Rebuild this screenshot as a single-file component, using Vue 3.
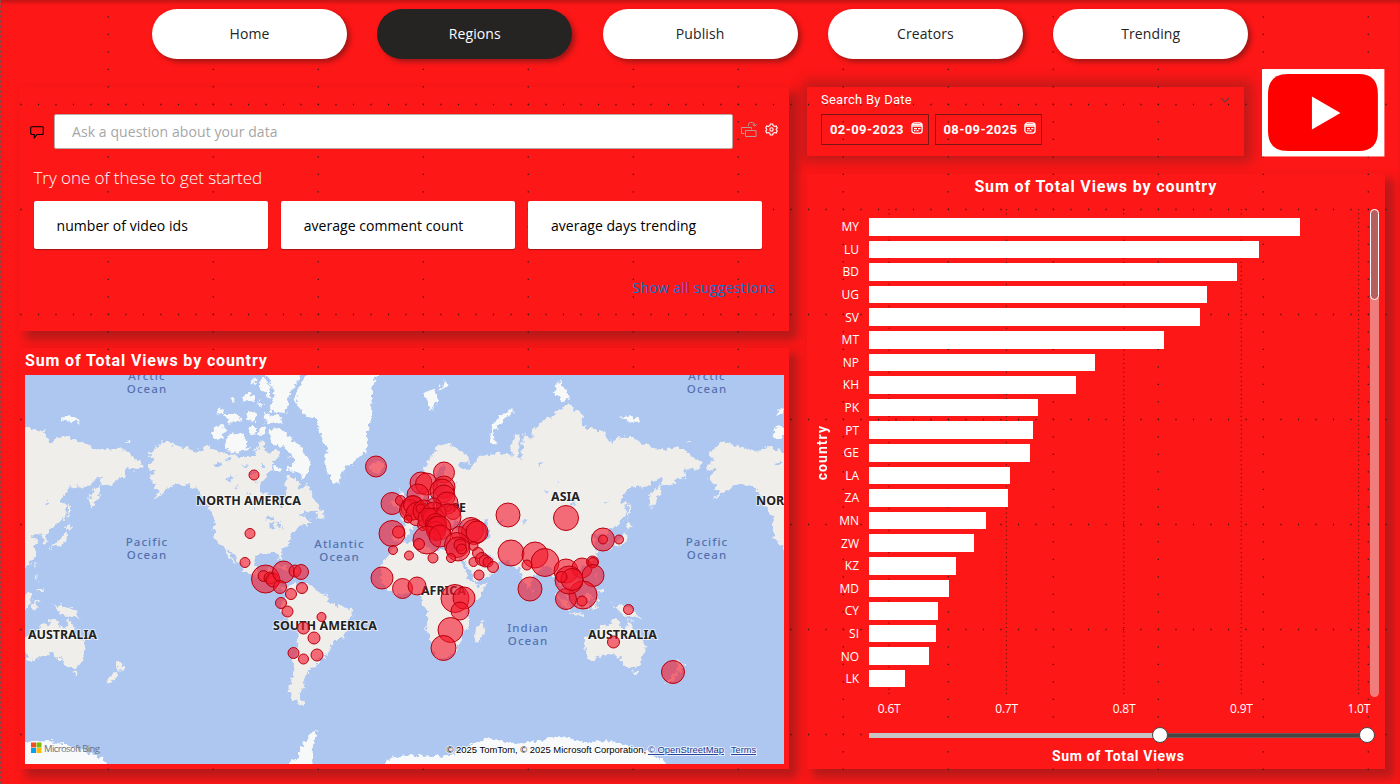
<script setup>
const tabs = ['Home', 'Regions', 'Publish', 'Creators', 'Trending']
const suggestions = ['number of video ids', 'average comment count', 'average days trending']
const dates = ['02-09-2023', '08-09-2025']

const bars = [
  ['MY', 431], ['LU', 390], ['BD', 367.5], ['UG', 338], ['SV', 331], ['MT', 295], ['NP', 225.5],
  ['KH', 207], ['PK', 168.7], ['PT', 163.5], ['GE', 161], ['LA', 140.7], ['ZA', 138.5], ['MN', 117],
  ['ZW', 105], ['KZ', 87], ['MD', 79.7], ['CY', 69], ['SI', 66.7], ['NO', 59.7], ['LK', 35.7],
]
const ticks = ['0.6T', '0.7T', '0.8T', '0.9T', '1.0T']

// Web Mercator projection, one full turn = 560px
const R = 560 / (2 * Math.PI)
function project(list) {
  return list.trim().split(/\s+/).map((pair) => {
    const [lon, lat] = pair.split(',').map(Number)
    const x = 407 + (lon * 560) / 360
    const y = 602 - R * Math.log(Math.tan(Math.PI / 4 + (lat * Math.PI) / 360))
    return x.toFixed(1) + ',' + y.toFixed(1)
  }).join(' ')
}

const land = [
  '-168,65.6 -164,66.5 -162,67 -166,68.3 -163,69.5 -156.5,71.3 -150,70.5 -141,69.7 -135,69 -128,70.3 -124,69.5 -115,68.5 -108,68 -98,68 -95,70 -94,72 -91,69.5 -88,68.5 -85,69.5 -82,69.5 -81.5,68 -86,66.5 -87,64.5 -94,61 -94.5,58.7 -92.5,57 -88,56.5 -82.3,55.2 -82,52.5 -79,51.5 -78.7,53 -79.5,55 -77,57 -78.5,59 -77.5,62.4 -73.5,62.3 -69.5,61 -69.5,58.8 -66,58.7 -64.5,60.3 -62,57.5 -60,55 -56,52.5 -56,51.5 -60,50.2 -66,50.2 -69.5,48 -64.5,49 -65,47 -61,45.7 -65.5,43.6 -67,45 -70,43.7 -70.5,42 -74,40.5 -75.5,38 -76,35 -81,31.7 -80,27 -80.7,25.2 -82.5,27.7 -84,30 -89.5,30 -94,29.6 -97.3,27.5 -97.7,22.5 -96,19.2 -94,18.2 -91,18.7 -90.3,21 -87,21.4 -88,18 -88.8,15.9 -83.3,15 -83.7,11 -81,8.8 -77.5,8.5 -78,7.5 -80.3,7.5 -83,8.3 -85.7,10.5 -87.7,13 -92,14.5 -94.5,16.2 -97,15.8 -102,18 -105.5,20 -105.5,22.7 -109,26 -112.8,31 -114.7,31.7 -112,27 -109.5,23.1 -112.2,25 -115,28 -117.1,32.5 -120.6,34.5 -124,39 -124.2,43 -124,48 -127.5,51 -131,55 -135,58.5 -140,59.8 -148,60.3 -151.5,59.3 -154,58.5 -159,56 -163,54.8 -158,58 -162,58.7 -162,60 -165.5,61.5 -165,63 -161,64.3 -166,64.5',
  '-59,47.7 -53,47 -53.5,49 -56,51.4', '-84.8,22 -80,23 -74.3,20.2 -77.5,19.9 -78,20.7', '-74,19.8 -68.5,18.7 -71,17.8 -74,18.4',
  '-77.5,8.5 -75,11 -71.5,12.3 -71.5,10.8 -68,11.5 -62,10.7 -57,6 -51.5,4.5 -50,0 -44,-2.5 -39,-3 -35,-5.5 -35,-9 -39,-13 -39.3,-18 -41,-22 -45,-23.5 -48.5,-26 -49,-29 -53.5,-34 -58.3,-34 -57,-36.5 -58,-38.5 -62,-39 -62.5,-41 -65,-41 -63.7,-42.5 -67.3,-46 -66,-48 -69,-50.5 -68.5,-52.5 -65.5,-55 -69,-55.3 -73,-53 -75.5,-50 -75.5,-46.7 -73,-42 -73.5,-37 -71.5,-32 -70.3,-25 -70.3,-18.3 -76,-14 -79.5,-7 -81.2,-5 -80.3,-3 -80.8,-1 -78.7,1.5 -77.3,4',
  '-6,35.8 -9.8,31.5 -13,27.7 -17,21.5 -16.3,18 -17.4,14.7 -15,11 -12.7,8 -9,5 -7.5,4.4 -4,5.2 2,6.3 5,5.2 7,4.4 9.5,4 9.8,1 9,-1 12,-5 13.5,-9 13.7,-12 11.8,-17 14.5,-22.5 15.3,-27 18,-32.5 18.5,-34.3 22,-34.1 26,-33.8 30.5,-31 32.8,-27.5 35.4,-24 35,-20.5 40.5,-15.5 40.5,-10.5 39,-6.5 41.5,-1.8 48,4.5 51.2,11.8 44.5,10.4 43,12 39,15.5 37,19.5 35.5,24 32.5,29.9 34,31.2 32,31.2 29,30.9 25,31.6 20,32.5 19,30.5 15.5,31.7 11,33.2 10.5,37 0,35.7',
  '-9.2,38.8 -8.9,37 -6.2,36.5 -5.3,36.1 -2,36.8 0,38.6 0,40 3.2,42 4,43.5 7.5,43.8 10.3,43.3 12.5,41.5 15.7,40 16,38 18.3,40 13.8,42.8 12.4,45.3 15,44.6 19.4,41.8 19.5,40 22.8,36.6 24,38 23,40.5 26.2,40.7 26.2,39.3 27.5,37 30.5,36.5 36,36.7 35,32.5 34,31.2 32.5,29.9 34.8,28 39,21.5 42.7,16.5 43.5,12.7 45,12.8 52,16 55.3,17.5 59.8,22.5 56.3,26.2 54,24.2 51.5,25.8 50,26.7 48,30 50.5,30 54.5,26.7 61.5,25.2 66.7,25 69,22.3 70.8,20.8 72.7,21 72.9,18 74.8,13 77.5,8.1 79.8,10.5 80.3,15.5 82.5,17 87,21.5 91.5,22.7 94.3,16.2 97.5,16.5 98.7,10 100.4,6.5 103.5,1.3 103.4,4.3 100.2,8 99.2,11 100,13.4 102.5,12.1 105,8.7 109.3,12 108.5,15.5 105.7,19 108.2,21.5 110,20.5 113.5,22.2 118,24.3 121.8,29 120,34 122.3,37 118,38.5 121.5,40.8 125,39.7 126.5,37 126.5,34.4 129.4,35.5 127.6,39.5 130.6,42.4 135.5,44.5 140.5,48.5 141,53 137,54 138,55.5 142.5,59 148.5,59.4 155,59.3 160,61.6 164,62.5 163,60 158,57.8 155.7,56.5 156.8,51.1 160,53.5 162.5,57 163.3,59.8 170,60 176,62.4 179.3,62.3 179,65 187,64.3 190.2,66 184,67.5 180,69 175,69.9 161,69.5 152,71 140,72.5 130,71 127,73.3 113,74 113,76 104,77.7 92,75.7 81,73.6 80.5,72 77,72.3 74.5,72.8 74,68 72,67 72.5,73 69,72.9 67,69.5 68.5,68.3 60,68.6 54,68.3 46,68 44,66.3 40,64.6 35,64.3 33,66.6 41,66.3 40,67.7 33,69.4 26,71 19,70 12.5,66 10,63.5 5,61.8 5.5,59 8,58 11,59.2 12.5,56.2 14.3,55.5 16.5,57 18.8,60 17.3,61.5 22,65.8 25,65 21.5,62.5 22.5,60 29,60 23.5,59.2 24,57.2 21.2,57 19.5,54.4 14,54 10.5,54.3 10.5,57.5 8.2,57 8.5,54 4.5,52.5 1.5,50.8 -1.5,49.6 -4.7,48.5 -1.5,46 -1.5,43.4 -9,43.2',
  '-5.5,50 1,51 1.5,52.8 -2,55.8 -2,57.6 -5,58.6 -5,56 -3,54 -5,52', '-10,52 -6.2,52.2 -6,54.5 -8,55.2 -10,54',
  '142,54 143.5,52 143,49 142,46', '131,34 136,33.7 140.5,35.5 141.8,39.5 141.3,41.3 140,40 136.8,37 133,35.5', '140,42 145.3,43.4 142,45.4', '130,33.5 131.8,33 130.7,31.2',
  '120.3,16 122,18.5 121.5,14.5 124,13', '122,7 126.5,7 125.5,9.7', '120.2,23 121.9,25 120.8,22',
  '95.4,5.5 98.5,3.7 104,-2 105.8,-5.8 102,-4', '109,1.5 113,3 117,7 119,5 117.5,1 116,-4 111,-3', '105.3,-6.5 114.4,-7.8 114.4,-8.7 106,-7.6',
  '119.5,-5.5 119,-2.5 120,1 125,1.5 121,-1 123,-4', '131,-0.8 135,-3.3 138,-1.7 145,-4.5 150.5,-10.5 147,-9.5 143,-8.5 138,-8',
  '49.3,-12 50.3,-15.5 47,-25 44,-24.5 43.5,-21 44.5,-16', '80,9.5 81.8,7 80,6',
  '173,-34.5 178.3,-37.8 175.3,-41.5 173.8,-39', '172.7,-40.5 174.2,-41.7 168.5,-46.6 166.6,-45.8',
  '113.7,-22.5 114,-26 115.7,-32 115,-34.3 118,-35 124,-33.8 129,-31.7 133,-32 136,-34.8 138,-33 138,-35.6 140.5,-38 144,-38.5 147,-39 150,-37.2 151.3,-33.5 153.5,-28.5 151,-24 146.5,-19 145.3,-15 142.5,-10.8 141.5,-13.5 140.5,-17.6 137,-16 135.5,-15 136.8,-12.2 132.5,-11.3 130,-13.5 129,-15 126,-14 122.2,-18 119,-20',
  '144.8,-40.8 148.3,-41 147,-43.5',
].map(project)

const ice = [
  '-61.5,66.6 -64,63.5 -66,62 -72,64 -78,64.5 -73,65.8 -73,68 -79,70 -88,71 -89,73.5 -80,73.7 -75,72 -68,70.3 -67,68.8',
  '-117,70 -113,68.7 -105,69 -101,69.7 -105,72.5 -108,73 -114,72.7 -118,71', '-125,72 -121,71.5 -117,73 -115,73.5 -119,74.2 -124,74',
  '-66,82 -70,80.500 -75,79 -78,76.300 -89,76.500 -85,79 -90,81 -80,83 -70,83', '-80,74.6 -91,74.8 -92,76.4 -80,75.6', '-106,75 -115,74.8 -117,76 -108,76',
  '-96,73 -101,72.5 -102,74 -97,74', '-90.5,72.8 -95,72.5 -95,74 -91,74', '-97,75 -103,75.3 -102,76.6 -97,76.3', '-98,78 -105,78 -104,79 -98,78.8',
  '-88,78.3 -95,79.5 -93,81 -88,80', '-80.5,63.8 -86,64.3 -85,65.8 -81,64.5',
  '-117,76.300 -122,76 -120,77.300', '-110,77.800 -114,77.800 -112,78.500', '-100,80 -97,80.300 -99,80.900', '-96,77.300 -92,77.600 -95,78', '-99,69 -96,69.600 -98,70', '-74,68 -77,67.500 -76,68.500',
  '-73,78.3 -66,76 -58.5,75.5 -55,72 -51,69.5 -53.5,67 -52,64 -48,61 -43.5,60 -42.5,62.5 -40,65 -36,66 -30,68 -26,69.5 -25,71 -26,73 -23,75 -23,77.500 -22,80 -17,81.7 -25,83.3 -60,83 -65,81',
  '-24,65.5 -22.5,64 -18.5,63.4 -14,65 -16,66.4 -22,66.4', '11,79 16,76.7 19,78 20,79 16,79.5', '19,79.4 27,79.8 24,80.400',
  '53,71 57,70.6 55.5,73 61,75 68.5,76.4 67,76.9 58,75.5 54,73', '95,79 100,78 105,78.5 98,80.5', '137,75.5 143,74.8 150,75 144,76', '178.5,71 182,71 181,71.6',
  '-57,-63 -60,-66 -61,-70 -60,-74 -80,-74 -75,-71 -72,-71 -68,-68 -64,-65',
].map(project)

const water = [
  '28,41.5 28,43.5 31,46.5 36.5,45.2 41.5,42 37,41 33,42', '47,44.5 51,47 53,45 50.5,44.5 53.5,41 53.5,37.2 50,37.3 49,40.5',
  '-92,46.8 -86,46.7 -84.5,46.5 -88,48.5', '-87.8,42 -86.3,42 -85,45.8 -87.5,45', '-84,45.8 -81,45.5 -81.5,43.3 -83,43.5', '-83,41.7 -79,42.7 -80,42.9', '-124,66 -119,66.5 -121,65', '-116,62.3 -110,62.8 -114,61', '-98.5,53 -97,51 -98,50.8', '104,51.6 109.5,55.5 106,52', '31,61 32.5,60.5 31.5,60', '58.5,45.5 61,46 60,44', '74,46.2 78.5,46.7 75,45.2', '31.8,0.3 34,0 33,-2.3',
  '-103,58 -101,56.500 -102,56.200', '-112,59.200 -108,59.600 -110,58.800', '-106,66 -103,65.500 -104,64.800', '-101,63.500 -97,64.300 -99,62.800', '-117,67.300 -112,67.800 -114,66.900', '-94,66 -91,65.500 -93,64.500', '-98,60.500 -96,61 -97,59.800', '-72,54.500 -70,53.500 -74,53.200',
  '84,67 87,66 86,65', '96,62 98,60.500 97,60', '88,58 91,57.500 89,57', '127,53.800 130,54 128,53',
].map(project)

const bubbles = [
  [376,466.5,10.5],[421,483,11],[426.5,484,11],[444,472.5,10.5],[444,487,11],[442,491,12],[418,495,11],[392,503.5,11],[400.5,500.5,5],[444,496,11],
  [413,508,12],[410,510,10.5],[413,505,9.5],[418,514,12],[424,511,11],[447,503,11],[453,512,7.5],[434,505,7],[420.5,508.5,4.5],[426,516,4.5],[423,525,5.5],[408,519,4],
  [434,514,12],[434,519,11],[429,519,11],[448,517,13],[436,524,10.5],[436,527,10.5],[436,531,9.5],[439,528,12],[392,533.5,13],[398.5,532,6],[427,540,14],[419,544,5.5],[440,536,11],
  [471,530,12.5],[474,532,12.5],[477,532,11],[459,534,7.5],[457,545,12.5],[458,549,12],[460,545,6],[461.5,549,5],[393,550,4.5],[409,555.5,4.5],
  [433,558,5],[451,558,4.5],[473.5,546,4.5],[478,553,5.5],[473.5,562,4.5],[482,559,6.5],[485,561,6],[488,562,5],[493,567,5.5],
  [508,515,12],[511,553,13],[479,575,5],[382,578,11],[402.5,588.5,10],[417,586,9],[455,598.5,14],[464,598,11],[460,611,9],
  [450.5,630,12.5],[443.5,648,12.5],[265.5,579,14],[263.5,576,5.5],[270,578,6],[273,580,7],[283.5,572,11],[280,587,6.5],[295,571,6],
  [301,572,7.5],[302,588,5.5],[291,594,5.5],[281,603,5.5],[287.5,611.5,5.5],[321.5,617,4.5],[303.5,628,6],[314,638,6],[293.5,653,5.5],
  [303.5,659,5],[317,655,6],[245,562.5,5],[254,475,5],[250,533.5,5],[566,518,12.5],[603,539.5,11.5],[603,539.5,4.5],[619,539.5,4.5],
  [535,555,13],[545,562.5,14],[566,571,12],[582,568,10],[592.5,562,6],[593,562.5,5],[593,575.5,11],[583,595,14],[566,599,10.5],
  [569,580,14],[572,579.5,11],[561.5,577,5.5],[582,601,5],[530,589,12],[527,565,5],[628.5,609.5,5],[613.5,642,6],[673,672,11.5],
]
</script>

<template>
  <div class="page">
    <svg class="dots" width="1400" height="784" aria-hidden="true">
      <g stroke="#3a1a1a" stroke-width="1.3" fill="none">
        <path v-for="c in 13" :key="'c' + c" :d="`M${3.3 + c * 105} 16.2V784`" stroke-dasharray="1.2 16.3" />
        <path v-for="r in 7" :key="'r' + r" :d="`M20.4 ${r * 105 - 0.5}H1400`" stroke-dasharray="1.2 16.3" />
      </g>
    </svg>

    <nav class="tabs">
      <button v-for="t in tabs" :key="t" :class="['tab', { active: t === 'Regions' }]">{{ t }}</button>
    </nav>

    <main class="board">
      <div class="left">
        <section class="panel qa">
          <div class="over">
            <div class="ask-row">
              <svg class="bubble-icon" width="14" height="13" viewBox="0 0 14 13" fill="none" stroke="#000" stroke-width="1.1">
                <path d="M1.500.7h11l.8.8v6.200l-.8.8H7L4.300 11.800V8.500H1.500L.7 7.700V1.500z" />
              </svg>
              <div class="ask">Ask a question about your data</div>
              <svg class="convert-icon" width="16" height="17" viewBox="0 0 16 17" fill="none" stroke="#b99a98">
                <path d="M3.500 12.500H.5v-6h10v2M4.500 9.500h10.500v6H4.500zM7.500 5V3.500q0-2 2-2h2q2 0 2 3M11.500 3.500l2 1.500 2-1.500" />
              </svg>
              <svg class="gear-icon" width="13" height="13" viewBox="0 0 13 13" fill="none" stroke="#fff" stroke-width="1.1">
                <path d="M5.300 1h2.400l.4 1.600 1.500.8 1.600-.5 1.100 2-1.100 1.200v.8l1.100 1.200-1.100 2-1.600-.5-1.500.8-.4 1.600H5.300l-.4-1.600-1.500-.8-1.600.5-1.100-2 1.100-1.200v-.8L.7 4.900l1.100-2 1.600.5 1.500-.8z" />
                <circle cx="6.500" cy="6.500" r="1.700" />
              </svg>
            </div>
            <h2 class="try">Try one of these to get started</h2>
            <div class="cards">
              <div v-for="s in suggestions" :key="s" class="card">{{ s }}</div>
            </div>
            <a class="show-all">Show all suggestions</a>
          </div>
        </section>

        <section class="panel map-panel">
          <div class="over">
            <h3 class="title">Sum of Total Views by country</h3>
            <svg class="map" width="759" height="389" viewBox="25 375 759 389">
              <defs>
                <filter id="coast" x="-5%" y="-5%" width="110%" height="110%">
                  <feTurbulence type="fractalNoise" baseFrequency="0.22" numOctaves="2" seed="4" result="n" />
                  <feDisplacementMap in="SourceGraphic" in2="n" scale="8" xChannelSelector="R" yChannelSelector="G" />
                  <feGaussianBlur stdDeviation="0.4" />
                </filter>
                <g id="world">
                  <polygon v-for="(p, i) in land" :key="'l' + i" :points="p" fill="#efeeeb" />
                  <polygon v-for="(p, i) in ice" :key="'i' + i" :points="p" fill="#f7f8f8" />
                  <polygon v-for="(p, i) in water" :key="'w' + i" :points="p" fill="#adc7f1" />
                  <path d="M385 770V760L400 756L420 755L450 757L466 747L490 738L508 743L530 742L560 737L585 742L612 741L640 749L662 759L672 770Z" fill="#f7f9fb" />
                </g>
              </defs>
              <rect x="25" y="375" width="759" height="389" fill="#adc7f1" />
              <g filter="url(#coast)">
                <use href="#world" />
                <use href="#world" x="-560" />
                <use href="#world" x="560" />
              </g>
              <g class="ocean">
                <text x="147" y="380">Arctic</text><text x="147" y="393">Ocean</text>
                <text x="707" y="380">Arctic</text><text x="707" y="393">Ocean</text>
                <text x="147" y="546">Pacific</text><text x="147" y="559">Ocean</text>
                <text x="707" y="546">Pacific</text><text x="707" y="559">Ocean</text>
                <text x="339.500" y="548">Atlantic</text><text x="339.500" y="561">Ocean</text>
                <text x="528" y="632">Indian</text><text x="528" y="645">Ocean</text>
              </g>
              <g class="continent">
                <text x="196" y="505" textLength="105">NORTH AMERICA</text>
                <text x="756" y="505" textLength="105">NORTH AMERICA</text>
                <text x="273" y="630" textLength="104">SOUTH AMERICA</text>
                <text x="28" y="639" textLength="69">AUSTRALIA</text>
                <text x="588" y="639" textLength="69">AUSTRALIA</text>
                <text x="421" y="595" textLength="45">AFRICA</text>
                <text x="551" y="501" textLength="29">ASIA</text>
                <text x="420" y="512" textLength="46">EUROPE</text>
              </g>
              <g fill="#f41428" fill-opacity="0.6" stroke="#b8000c" stroke-width="1">
                <circle v-for="(b, i) in bubbles" :key="i" :cx="b[0]" :cy="b[1]" :r="b[2]" />
              </g>
              <g>
                <path d="M31 742.500h5v5h-5z" fill="#f25022" /><path d="M36.500 742.500h5v5h-5z" fill="#7fba00" />
                <path d="M31 748h5v5h-5z" fill="#00a4ef" /><path d="M36.500 748h5v5h-5z" fill="#ffb900" />
                <text class="bing" x="44" y="752" textLength="56">Microsoft Bing</text>
              </g>
              <g class="credit">
                <text x="446.500" y="753" textLength="199.500" lengthAdjust="spacingAndGlyphs">© 2025 TomTom, © 2025 Microsoft Corporation,</text>
                <text class="link" x="648" y="753" textLength="76" lengthAdjust="spacingAndGlyphs">© OpenStreetMap</text>
                <text class="link" x="731" y="753" textLength="25" lengthAdjust="spacingAndGlyphs">Terms</text>
              </g>
            </svg>
          </div>
        </section>
      </div>

      <div class="right">
        <div class="top-row">
          <section class="panel slicer">
            <div class="over">
              <div class="slicer-head">
                <span>Search By Date</span>
                <svg width="10" height="6" viewBox="0 0 10 6" fill="none" stroke="#6b3b3b" stroke-width="1.2"><path d="M1 1l4 4 4-4" /></svg>
              </div>
              <div class="dates">
                <div v-for="d in dates" :key="d" class="date">
                  <span>{{ d }}</span>
                  <svg width="12" height="12" viewBox="0 0 12 12" fill="none" stroke="#fff" stroke-width="1.3">
                    <rect x=".9" y=".9" width="10.200" height="10.200" rx="2.600" /><path d="M1 2.700h10M1 4.200h10M3 6.700h3M7 6.700h2.500M3 8.700h1.500M5.500 8.700h2" />
                  </svg>
                </div>
              </div>
            </div>
          </section>
          <svg class="logo" width="123" height="88" viewBox="0 0 123 88">
            <rect width="122.500" height="87.500" fill="#fff" />
            <path d="M26 5H97Q116 5 116 25V62Q116 82 97 82H26Q6 82 6 62V25Q6 5 26 5Z" fill="#f00" />
            <path d="M50 27.500L78.500 44L50 60.500Z" fill="#fff" />
          </svg>
        </div>

        <section class="panel chart">
          <div class="over">
            <h3 class="title center">Sum of Total Views by country</h3>
            <div class="chart-body">
              <div class="y-title"><span>country</span></div>
              <div class="plot">
                <svg class="gridlines" width="500" height="488" aria-hidden="true">
                  <path v-for="n in 5" :key="n" :d="`M${20 + (n - 1) * 117.400} 0V488`" stroke="#451010" stroke-width="1" stroke-dasharray="1 3.400" />
                </svg>
                <div v-for="b in bars" :key="b[0]" class="bar-row">
                  <span class="cat">{{ b[0] }}</span>
                  <div class="bar" :style="{ width: b[1] + 'px' }"></div>
                </div>
              </div>
              <div class="scroll"><div class="thumb"></div></div>
            </div>
            <div class="ticks"><span v-for="t in ticks" :key="t">{{ t }}</span></div>
            <div class="slider"><i class="knob"></i><div class="range"></div><i class="knob"></i></div>
            <div class="x-title">Sum of Total Views</div>
          </div>
        </section>
      </div>
    </main>
  </div>
</template>

<style>
body { margin: 0; background: #fe1717; }
</style>

<style scoped>
* { box-sizing: border-box; }
.page {
  position: relative; width: 1400px; height: 784px; overflow: hidden; background: #fe1717; color: #fff;
  font-family: "Open Sans", "Noto Sans", sans-serif; border-left: 1px dashed #8f4747;
  box-shadow: inset 0 4px 4px -2px rgba(90, 20, 20, .45);
}
.dots { position: absolute; left: -1px; top: 0; z-index: 1; }
.tabs { position: relative; z-index: 2; display: flex; gap: 30.300px; padding: 9px 0 0 151px; }
.tab {
  width: 195px; height: 50px; border: 0; padding: 0 0 2px; border-radius: 25px; background: #fff; color: #252423;
  font: 400 14px "Open Sans", sans-serif; letter-spacing: .1px; box-shadow: 3px 3px 5px rgba(70, 20, 20, .5);
}
.tab.active { background: #252423; color: #fff; }
.board { display: flex; gap: 18px; padding: 28px 0 0 19px; }
.left { width: 769px; display: flex; flex-direction: column; gap: 17px; }
.right { width: 577.500px; display: flex; flex-direction: column; }
.panel { background: #fe1717; box-shadow: 7px 7px 9px 2px rgba(60, 30, 30, .36); }
.over { position: relative; z-index: 2; }
.qa { height: 244px; }
.qa .over { padding: 27px 0 0 13px; }
.ask-row { display: flex; margin-left: -3px; }
.bubble-icon { margin: 12px 10px 0 0; flex: none; }
.ask {
  width: 679px; height: 35px; flex: none; border: 1px solid #b9a8a6; background: #fff; color: #a6a6a6; border-radius: 2px;
  font-weight: 400; font-size: 14px; line-height: 34px; padding-left: 17px; letter-spacing: .08px;
}
.convert-icon { margin: 7px 8px 0 8px; flex: none; }
.gear-icon { margin-top: 9px; flex: none; }
.try { margin: 17px 0 11px .5px; font-size: 17px; font-weight: 300; line-height: 24px; letter-spacing: -.06px; }
.cards { display: flex; gap: 12.700px; margin-left: .5px; }
.card {
  width: 234.500px; height: 48px; background: #fff; color: #000; border-radius: 2px; padding-left: 23px;
  font-size: 14px; font-weight: 400; line-height: 50px; letter-spacing: .05px; box-shadow: 0 1px 1px rgba(70, 20, 20, .5);
}
.show-all { display: block; text-align: right; margin: 29px 14px 0 0; color: #0078d4; font-size: 14px; font-weight: 400; line-height: 20px; letter-spacing: .4px; }
.map-panel { height: 421px; }
.map-panel .over { padding-left: 5px; }
.title { margin: 0; height: 27px; font: 700 16px/26px Roboto, sans-serif; letter-spacing: .86px; }
.map { display: block; }
.ocean text { font: 500 11.500px "Noto Sans", sans-serif; fill: #5672ad; letter-spacing: 1.050px; text-anchor: middle; }
.continent text { font: 700 12.500px "Noto Sans", sans-serif; fill: #222; stroke: #fff; stroke-opacity: .6; stroke-width: 2px; paint-order: stroke; }
.bing { font: 400 9.500px "Open Sans", sans-serif; fill: #6b7178; }
.credit text { font: 400 9.500px "Liberation Sans", sans-serif; fill: #000; stroke: #fff; stroke-opacity: .7; stroke-width: 2px; paint-order: stroke; }
.credit .link { fill: #1f3a93; text-decoration: underline; }
.top-row { display: flex; gap: 18px; height: 87px; }
.slicer { width: 437px; height: 69px; box-shadow: 2px 0 12px 6px rgba(60, 30, 30, .32); }
.slicer .over { padding: 4px 14px 0; }
.slicer-head { display: flex; justify-content: space-between; align-items: center; height: 18px; font: 400 13px/18px Roboto, sans-serif; letter-spacing: .25px; }
.dates { display: flex; gap: 6px; margin-top: 5px; }
.date {
  width: 107.500px; height: 31px; border: 1.500px solid #7d1616; display: flex; align-items: center; padding: 0 0 0 8px;
  font: 700 13px/28px Roboto, sans-serif; letter-spacing: .4px;
}
.date svg { margin: -3px 0 0 7px; flex: none; }
.logo { margin-top: -18px; position: relative; z-index: 2; }
.chart { height: 595px; }
.title.center { text-align: center; height: 35px; line-height: 25px; }
.chart-body { display: flex; height: 488px; }
.y-title { width: 30px; display: flex; align-items: center; justify-content: center; }
.y-title span { writing-mode: vertical-rl; transform: rotate(180deg); font: 700 14px Roboto, sans-serif; letter-spacing: 1.050px; }
.plot { position: relative; width: 533px; padding-top: 6.500px; }
.gridlines { position: absolute; left: 32px; top: 0; }
.bar-row { position: relative; display: flex; align-items: center; height: 22.600px; }
.cat { width: 22px; margin-right: 10px; font-size: 12px; font-weight: 400; white-space: nowrap; display: flex; justify-content: flex-end; }
.bar { height: 17.600px; background: #fff; }
.scroll { width: 9px; height: 488px; background: #f07c7c; border-radius: 5px; }
.thumb { height: 91px; border: 1px solid #fff; border-radius: 5px; background: #b75f5f; }
.ticks { display: flex; margin: 3px 0 0 23.500px; }
.ticks span { width: 117.400px; text-align: center; font-size: 12px; font-weight: 400; line-height: 18px; letter-spacing: -.2px; flex: none; }
.slider { display: flex; align-items: center; height: 16px; margin: 9px 0 0 62px; width: 506px; background: linear-gradient(#c8c6c4, #c8c6c4) 0 50% / 290px 5px no-repeat; padding-left: 282.500px; }
.knob { width: 16px; height: 16px; border-radius: 50%; background: #fff; border: 1.500px solid #484644; flex: none; }
.range { flex: 1; height: 5px; background: #484644; border: 1px solid #6b5a58; border-width: 1px 0; }
.x-title { text-align: center; margin: 4px 0 0 45px; font: 700 14px/18px Roboto, sans-serif; letter-spacing: .65px; }
</style>
